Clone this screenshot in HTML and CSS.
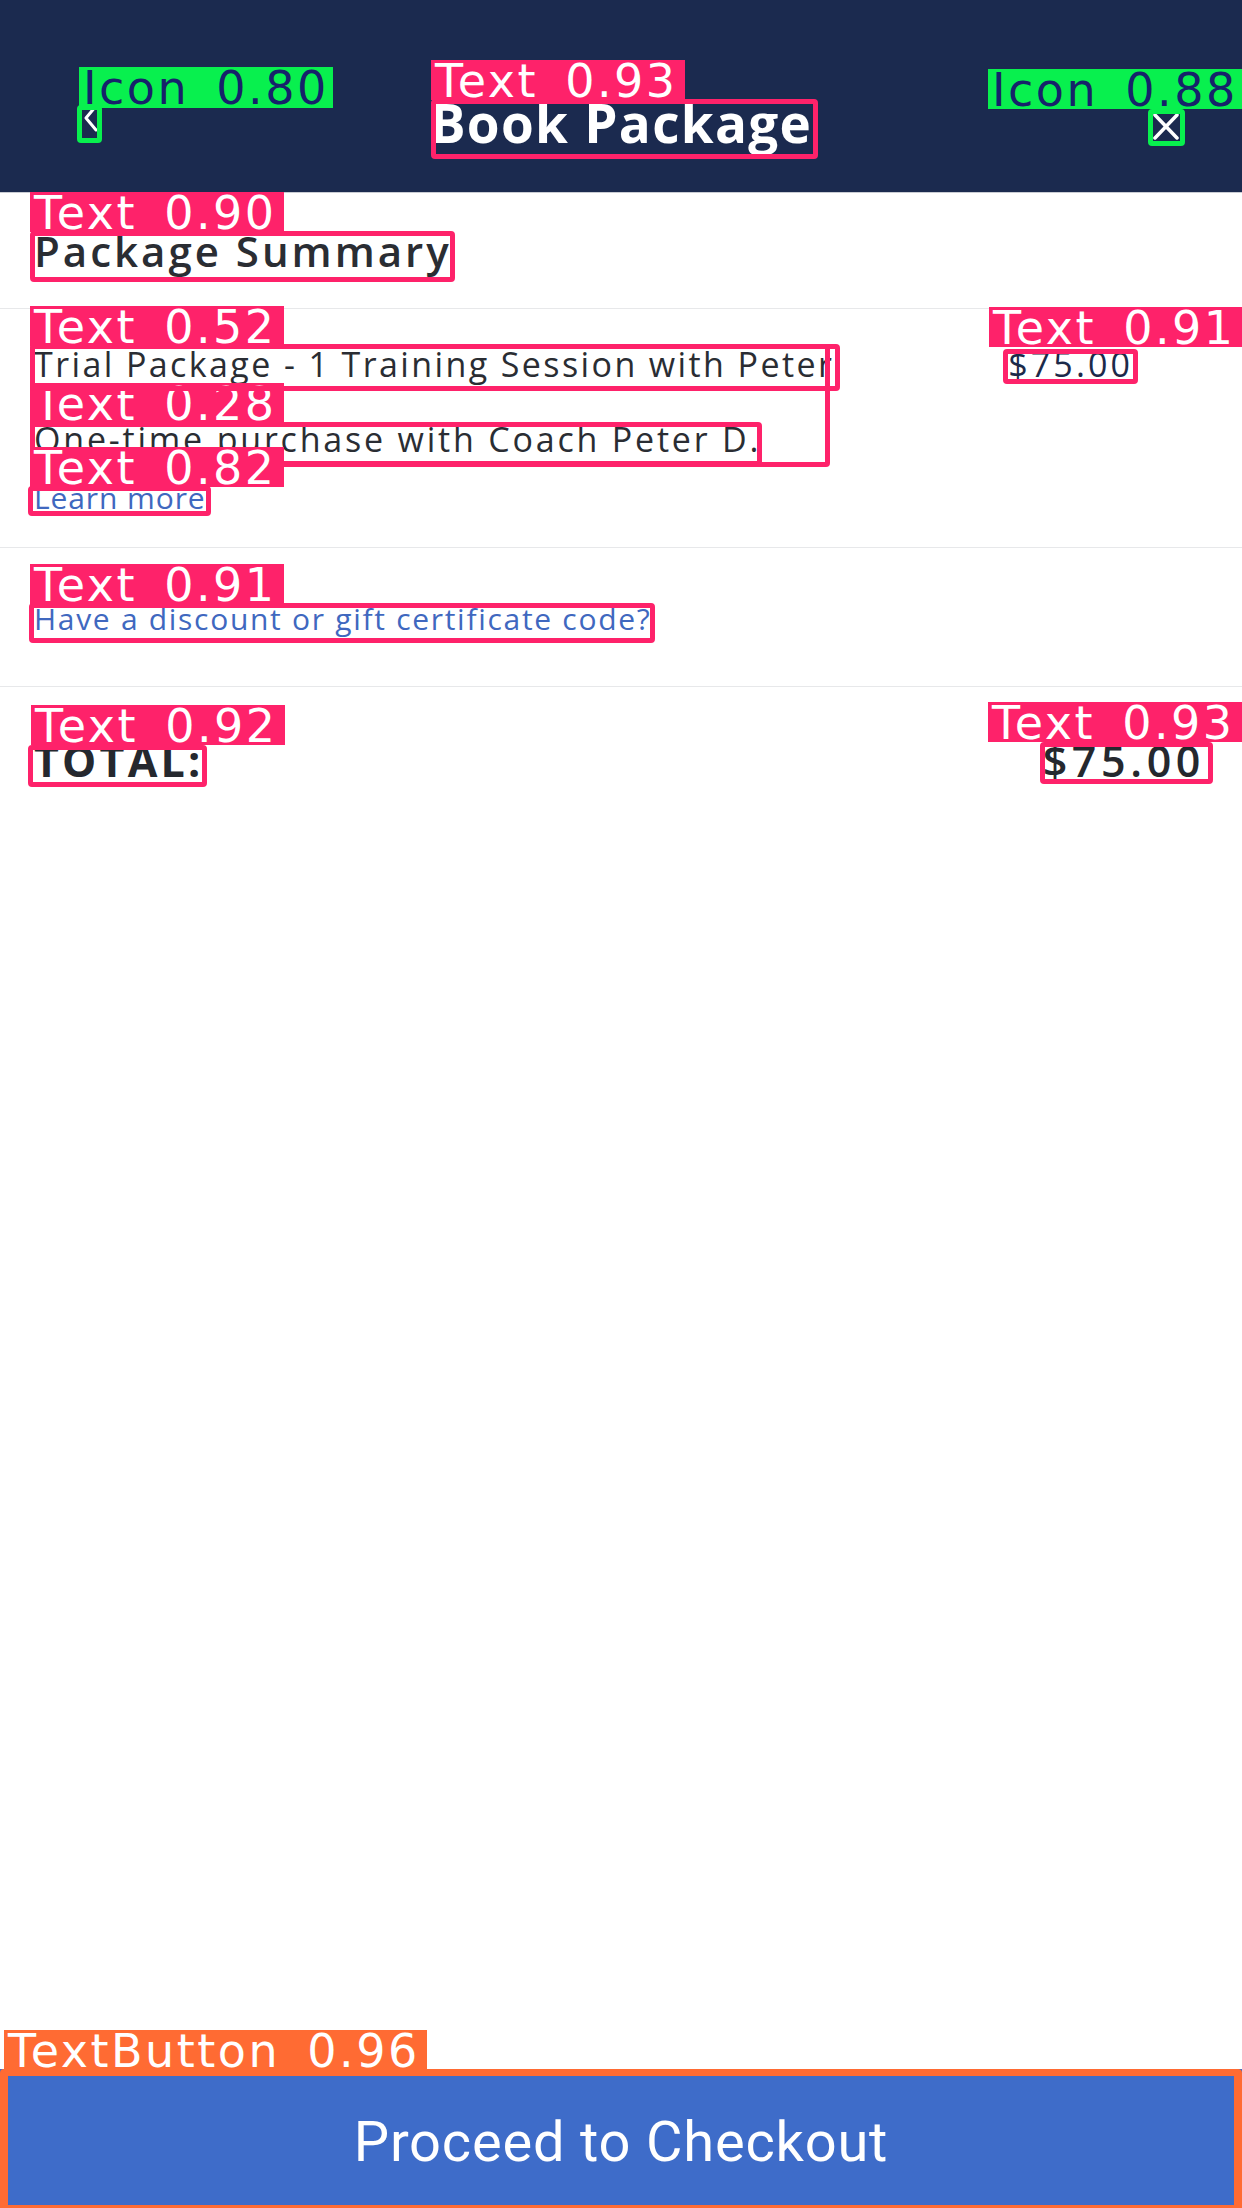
FILE: index.html
```html
<!DOCTYPE html>
<html lang="en">
<head>
<meta charset="utf-8">
<title>Book Package</title>
<link rel="stylesheet" href="styles.css">
</head>
<body>
<div class="screen">
  <header class="topbar">
    <div class="topbar-left">
      <svg class="icon-back" width="16" height="28" viewBox="0 0 16 28" aria-hidden="true">
        <polyline points="13,2 3,14 13,26" fill="none" stroke="#ffffff" stroke-width="3" stroke-linecap="round" stroke-linejoin="round"/>
      </svg>
    </div>
    <h1 class="topbar-title">Book Package</h1>
    <div class="topbar-right">
      <svg class="icon-close" width="26" height="27" viewBox="0 0 26 27" aria-hidden="true">
        <line x1="2" y1="2" x2="24" y2="25" stroke="#ffffff" stroke-width="3.5" stroke-linecap="round"/>
        <line x1="24" y1="2" x2="2" y2="25" stroke="#ffffff" stroke-width="3.5" stroke-linecap="round"/>
      </svg>
    </div>
  </header>

  <main class="content">
    <section class="section summary">
      <h2 class="summary-title">Package Summary</h2>
    </section>

    <section class="section item">
      <div class="item-row">
        <span class="item-name">Trial Package - 1 Training Session with Peter</span>
        <span class="item-price">$75.00</span>
      </div>
      <p class="item-desc">One-time purchase with Coach Peter D.</p>
      <a class="item-link">Learn more</a>
    </section>

    <section class="section discount">
      <a class="discount-link">Have a discount or gift certificate code?</a>
    </section>

    <section class="section total">
      <span class="total-label">TOTAL:</span>
      <span class="total-price">$75.00</span>
    </section>
  </main>

  <button class="checkout">Proceed to Checkout</button>

  <div class="annot" aria-hidden="true">
    <div class="box green b-back"></div>
    <div class="lab green l-back">Icon 0.80</div>
    <div class="box pink b-title"></div>
    <div class="lab pink l-title">Text 0.93</div>
    <div class="box green b-close"></div>
    <div class="lab green l-close">Icon 0.88</div>

    <div class="box pink b-summary"></div>
    <div class="lab pink l-summary">Text 0.90</div>

    <div class="lab pink l-onetime">Text 0.28</div>
    <div class="box pink b-onetime"></div>
    <div class="box pink b-item"></div>
    <div class="box pink b-trial"></div>
    <div class="lab pink l-trial">Text 0.52</div>
    <div class="box pink b-price"></div>
    <div class="lab pink l-price">Text 0.91</div>
    <div class="lab pink l-learn">Text 0.82</div>
    <div class="box pink b-learn"></div>

    <div class="box pink b-discount"></div>
    <div class="lab pink l-discount">Text 0.91</div>

    <div class="box pink b-total"></div>
    <div class="lab pink l-total">Text 0.92</div>
    <div class="box pink b-totalprice"></div>
    <div class="lab pink l-totalprice">Text 0.93</div>

    <div class="box orange b-button"></div>
    <div class="lab orange l-button">TextButton 0.96</div>
  </div>
</div>
</body>
</html>
```

FILE: styles.css
```css
* { box-sizing: border-box; }

html, body {
  margin: 0;
  padding: 0;
  background: #ffffff;
}

.screen {
  position: relative;
  width: 1242px;
  height: 2208px;
  overflow: hidden;
  display: flex;
  flex-direction: column;
  background: #ffffff;
  font-family: "Open Sans", "Noto Sans", sans-serif;
  color: #2a2d33;
}

/* ---------- top bar ---------- */
.topbar {
  height: 193px;
  flex: none;
  background: #1b2a4f;
  border-bottom: 1px solid #c9ccd3;
  display: grid;
  grid-template-columns: 1fr auto 1fr;
  align-items: start;
  padding-top: 93px;
}

.topbar-left {
  padding-left: 83px;
  padding-top: 11px;
}

.topbar-right {
  display: flex;
  justify-content: flex-end;
  padding-right: 63px;
  padding-top: 20px;
}

.icon-back, .icon-close { display: block; }

.topbar-title {
  margin: 0;
  font-size: 53px;
  line-height: 60px;
  font-weight: 700;
  letter-spacing: 1.3px;
  color: #ffffff;
}

/* ---------- content ---------- */
.content {
  flex: 1;
  display: flex;
  flex-direction: column;
}

.section {
  padding: 0 37px 0 34px;
  border-bottom: 1px solid #e7e8ea;
}

.summary {
  padding-top: 33px;
  padding-bottom: 32px;
}

.summary-title {
  margin: 0;
  font-size: 42px;
  line-height: 50px;
  font-weight: 600;
  letter-spacing: 3px;
  color: #2a2d33;
}

.item {
  padding-top: 34px;
  padding-bottom: 31px;
  display: flex;
  flex-direction: column;
  align-items: flex-start;
}

.item-row {
  align-self: stretch;
  display: flex;
  align-items: baseline;
  justify-content: space-between;
}

.item-name {
  font-size: 34px;
  line-height: 42px;
  letter-spacing: 2.4px;
  color: #2a2d33;
}

.item-price {
  font-size: 34px;
  line-height: 42px;
  letter-spacing: 3.1px;
  color: #1c2a4a;
  margin-right: 72px;
}

.item-desc {
  margin: 33px 0 0;
  font-size: 34px;
  line-height: 42px;
  letter-spacing: 2.8px;
  color: #2a2d33;
}

.item-link {
  margin-top: 20px;
  font-size: 30px;
  line-height: 36px;
  letter-spacing: 0.9px;
  color: #4068bf;
}

.discount {
  padding-top: 53px;
  padding-bottom: 49px;
}

.discount-link {
  display: block;
  font-size: 30px;
  line-height: 36px;
  letter-spacing: 1.7px;
  color: #4068bf;
}

.total {
  padding-top: 48px;
  border-bottom: none;
  display: flex;
  align-items: baseline;
  justify-content: space-between;
}

.total-label {
  font-size: 43px;
  line-height: 52px;
  font-weight: 700;
  letter-spacing: 3.2px;
  color: #25282e;
}

.total-price {
  font-size: 43px;
  line-height: 52px;
  font-weight: 600;
  letter-spacing: 4.6px;
  color: #25282e;
}

/* ---------- bottom button ---------- */
.checkout {
  flex: none;
  height: 139px;
  width: 100%;
  border: none;
  margin: 0;
  background: #3e6cc9;
  color: #ffffff;
  font-family: Roboto, "Noto Sans", sans-serif;
  font-size: 56px;
  font-weight: 400;
  letter-spacing: 0.8px;
  display: flex;
  align-items: center;
  justify-content: center;
  padding: 6px 0 0;
}

/* ---------- detection overlay ---------- */
.annot {
  position: absolute;
  inset: 0;
  pointer-events: none;
}

.box {
  position: absolute;
  border: 5px solid;
  border-radius: 4px;
}

.lab {
  position: absolute;
  height: 40px;
  width: 254px;
  padding-left: 4px;
  overflow: hidden;
  white-space: nowrap;
  font-family: "DejaVu Sans", "Liberation Sans", sans-serif;
  font-size: 46px;
  line-height: 42px;
  letter-spacing: 2.5px;
  word-spacing: 10px;
  color: #ffffff;
}

.pink { border-color: #fe226a; }
.lab.pink { background: #fe226a; }
.green { border-color: #08f04e; }
.lab.green { background: #08f04e; color: #16226a; }
.orange { border-color: #ff6b33; }
.lab.orange { background: #ff6b33; }

/* header annotations */
.b-back { left: 77px; top: 105px; width: 25px; height: 38px; }
.l-back { left: 79px; top: 67px; height: 41px; }
.b-title { left: 431px; top: 99px; width: 387px; height: 60px; }
.l-title { left: 431px; top: 60px; }
.b-close { left: 1148px; top: 109px; width: 37px; height: 37px; }
.l-close { left: 988px; top: 69px; width: 260px; }

/* summary */
.b-summary { left: 30px; top: 231px; width: 425px; height: 51px; }
.l-summary { left: 30px; top: 192px; }

/* line item */
.b-trial { left: 30px; top: 344px; width: 810px; height: 47px; }
.l-trial { left: 30px; top: 306px; }
.b-item { left: 30px; top: 344px; width: 800px; height: 123px; }
.b-onetime { left: 30px; top: 422px; width: 732px; height: 44px; }
.l-onetime { left: 30px; top: 383px; }
.b-price { left: 1003px; top: 349px; width: 135px; height: 35px; }
.l-price { left: 989px; top: 307px; width: 260px; }
.b-learn { left: 28px; top: 486px; width: 183px; height: 30px; }
.l-learn { left: 30px; top: 447px; }

/* discount */
.b-discount { left: 29px; top: 603px; width: 626px; height: 40px; }
.l-discount { left: 30px; top: 564px; }

/* total */
.b-total { left: 28px; top: 745px; width: 179px; height: 42px; }
.l-total { left: 31px; top: 705px; }
.b-totalprice { left: 1040px; top: 742px; width: 173px; height: 42px; }
.l-totalprice { left: 988px; top: 702px; width: 260px; }

/* button */
.b-button { left: 0; top: 2069px; width: 1242px; height: 143px; border-width: 7px 8px; }
.l-button { left: 4px; top: 2030px; width: 423px; height: 39px; }
```
